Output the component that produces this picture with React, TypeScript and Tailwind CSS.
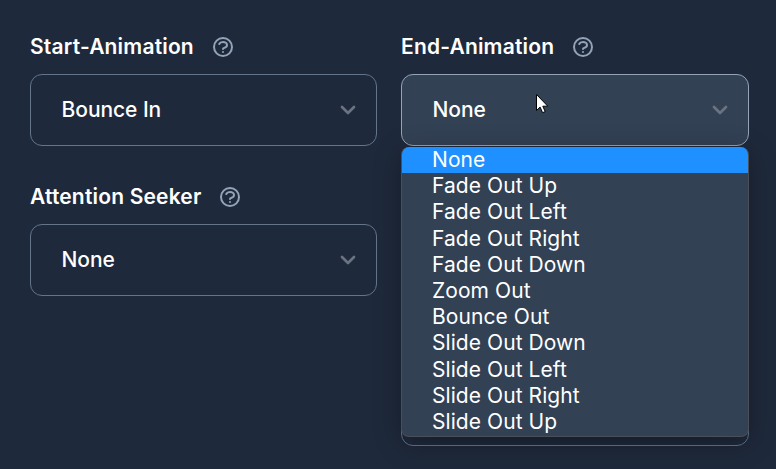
import React from 'react';

interface SelectFieldProps {
  label?: string;
  value?: string;
  active?: boolean;
  children?: React.ReactNode;
}

const END_ANIMATIONS = [
  'None',
  'Fade Out Up',
  'Fade Out Left',
  'Fade Out Right',
  'Fade Out Down',
  'Zoom Out',
  'Bounce Out',
  'Slide Out Down',
  'Slide Out Left',
  'Slide Out Right',
  'Slide Out Up',
];

const HelpIcon: React.FC = () => (
  <svg
    className="w-6 h-6 text-[#94a3b8]"
    viewBox="0 0 24 24"
    fill="none"
    stroke="currentColor"
    strokeWidth="2"
    strokeLinecap="round"
    strokeLinejoin="round"
  >
    <path d="M8.228 9c.549-1.165 2.03-2 3.772-2 2.21 0 4 1.343 4 3 0 1.4-1.278 2.575-3.006 2.907-.542.104-.994.54-.994 1.093m0 3h.01M21 12a9 9 0 11-18 0 9 9 0 0118 0z" />
  </svg>
);

const Chevron: React.FC = () => (
  <svg
    className="w-[30px] h-[30px] text-[#6b7280]"
    viewBox="0 0 20 20"
    fill="none"
    stroke="currentColor"
    strokeWidth="1.8"
    strokeLinecap="round"
    strokeLinejoin="round"
  >
    <path d="M6 8l4 4 4-4" />
  </svg>
);

const SelectField: React.FC<SelectFieldProps> = ({ label, value, active = false, children }) => (
  <div className="relative">
    <div className="flex items-center h-[30px] mb-3 text-[21px] font-semibold tracking-[0.18px]">
      {label && (
        <>
          <span className="mr-[17px]">{label}</span>
          <HelpIcon />
        </>
      )}
    </div>
    <div
      className={`flex items-center justify-between h-[72px] pl-[30.5px] pr-[13px] rounded-xl border text-[21px] font-medium tracking-[-0.05px] ${
        active ? 'bg-[#334155] border-[#94a3b8]' : 'border-[#64748b]'
      }`}
    >
      <span>{value}</span>
      {value && <Chevron />}
    </div>
    {children}
  </div>
);

const OptionList: React.FC<{ options: string[]; selected: string }> = ({ options, selected }) => (
  <ul className="absolute z-10 left-0 right-0 top-full mt-px h-[290px] overflow-hidden rounded-lg border border-t-0 border-[#4a4f57] bg-[#334155] text-[21px] leading-[26.2px] tracking-[0.07px] shadow-[0_6px_28px_rgba(0,0,0,0.3)]">
    {options.map((option) => (
      <li
        key={option}
        className={`h-[26.2px] pl-[30px] ${option === selected ? 'bg-[#1e90ff]' : ''}`}
      >
        {option}
      </li>
    ))}
  </ul>
);

const Cursor: React.FC = () => (
  <svg className="absolute z-20 left-[535px] top-[93px] w-[14px] h-[21px]" viewBox="0 0 14 21">
    <path
      d="M1.5 1.5v16l3.6-3.4 2.5 5.6 2.6-1.1-2.4-5.4h5z"
      fill="#fff"
      stroke="#000"
      strokeWidth="1"
    />
  </svg>
);

const App: React.FC = () => (
  <div className="relative w-[776px] h-[469px] overflow-hidden bg-[#1e293b] text-white font-['Inter',sans-serif] pl-[30px] pr-[27px] pt-8">
    <div className="grid grid-cols-[347px_348px] gap-x-6 gap-y-9">
      <SelectField label="Start-Animation" value="Bounce In" />
      <SelectField label="End-Animation" value="None" active>
        <OptionList options={END_ANIMATIONS} selected="None" />
      </SelectField>
      <SelectField label="Attention Seeker" value="None" />
      <SelectField />
      <div />
      <SelectField />
    </div>
    <Cursor />
  </div>
);

export default App;
